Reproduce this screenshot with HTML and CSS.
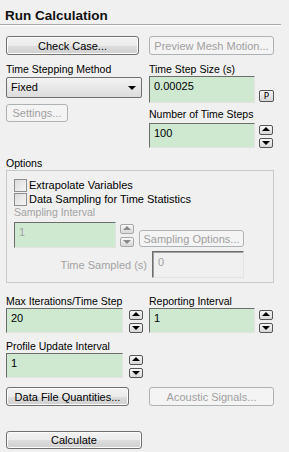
FILE: index.html
```html
<html>
<head>
<title>Run Calculation</title>
<link rel="stylesheet" href="styles.css">
</head>
<body>
	<div id="panel">

		<div class="header"><h1>Run Calculation</h1></div>

		<div class="grid row-buttons">
			<button class="btn wide">Check Case...</button>
			<button class="btn off preview">Preview Mesh Motion...</button>
		</div>

		<div class="grid row-time">
			<div class="col">
				<label class="lbl">Time Stepping Method</label>
				<div class="select">Fixed<span class="caret"></span></div>
				<button class="btn off settings">Settings...</button>
			</div>
			<div class="col">
				<label class="lbl">Time Step Size (s)</label>
				<div class="field bottom">
					<div class="input tall">0.00025</div>
					<button class="pbtn">P</button>
				</div>
				<label class="lbl steps">Number of Time Steps</label>
				<div class="field">
					<div class="input">100</div>
					<div class="spin"><span class="up"></span><span class="down"></span></div>
				</div>
			</div>
		</div>

		<label class="lbl options">Options</label>
		<div class="group">
			<div class="check"><span class="box"></span>Extrapolate Variables</div>
			<div class="check"><span class="box"></span>Data Sampling for Time Statistics</div>
			<label class="lbl dim">Sampling Interval</label>
			<div class="sampling">
				<div class="field">
					<div class="input small dim">1</div>
					<div class="spin dim"><span class="up"></span><span class="down"></span></div>
				</div>
				<button class="btn off sopts">Sampling Options...</button>
			</div>
			<div class="sampled">
				<span class="dim sampled-lbl">Time Sampled (s)</span>
				<div class="input gray">0</div>
			</div>
		</div>

		<div class="grid row-iter">
			<div class="col">
				<label class="lbl">Max Iterations/Time Step</label>
				<div class="field">
					<div class="input left">20</div>
					<div class="spin"><span class="up"></span><span class="down"></span></div>
				</div>
				<label class="lbl profile">Profile Update Interval</label>
				<div class="field">
					<div class="input left">1</div>
					<div class="spin"><span class="up"></span><span class="down"></span></div>
				</div>
			</div>
			<div class="col">
				<label class="lbl">Reporting Interval</label>
				<div class="field">
					<div class="input">1</div>
					<div class="spin"><span class="up"></span><span class="down"></span></div>
				</div>
			</div>
		</div>

		<div class="grid row-data">
			<button class="btn datafile">Data File Quantities...</button>
			<button class="btn off preview">Acoustic Signals...</button>
		</div>

		<button class="btn calc">Calculate</button>
	</div>
</body>
</html>
```

FILE: styles.css
```css
body{
	margin:0;padding:0;
	background-color:#f0f0f0;
	font-family:"Liberation Sans", Arial, sans-serif;
	font-size:10.5px;
	color:#000;
}

	div#panel{
		padding:0 0 0 6px;
		width:283px;
		height:452px;
		box-sizing:border-box;
		overflow:hidden;
	}

	div.header{
		margin-left:-6px;
		width:281px;
		height:24px;
		border-bottom:1px solid #a8a8a8;
		box-shadow:0 1px 0 #ffffff;
	}

	div.header h1{
		margin:0;
		padding:8px 0 0 5px;
		font-size:13.5px;
		line-height:15px;
		font-weight:bold;
		color:#111;
	}

	div.grid{
		display:grid;
		grid-template-columns:136px 126px;
		column-gap:7px;
	}

	div.col{
		display:flex;
		flex-direction:column;
		align-items:flex-start;
	}

	.lbl{
		display:block;
		height:13px;
		line-height:13px;
		white-space:nowrap;
	}

	.dim{
		color:#a3a3a3;
	}

	/* buttons */
	.btn{
		font-family:inherit;
		font-size:11px;
		height:19px;
		padding:0;
		color:#000;
		border:1px solid #707070;
		border-radius:3px;
		background:linear-gradient(#f2f2f2 0%, #ebebeb 50%, #dddddd 51%, #cfcfcf 100%);
		box-shadow:inset 0 0 0 1px #fcfcfc;
	}

	.btn.off{
		color:#a0a0a0;
		border-color:#adb2b5;
		background:#f4f4f4;
		box-shadow:none;
	}

	div.row-buttons{ margin-top:11px; }
	.btn.wide{ width:133px; }
	.btn.preview{ width:125px; }

	div.row-time{ margin-top:8px; }

	div.select{
		position:relative;
		width:136px;
		height:21px;
		margin-top:1px;
		box-sizing:border-box;
		border:1px solid #707070;
		border-radius:2px;
		background:linear-gradient(#f3f3f3, #dcdcdc);
		padding:3px 0 0 4px;
		line-height:13px;
		font-size:11px;
	}

	span.caret{
		position:absolute;
		right:5px;
		top:8px;
		border-left:4px solid transparent;
		border-right:4px solid transparent;
		border-top:4px solid #000;
	}

	.btn.settings{
		width:62px;
		height:18px;
		margin-top:6px;
	}

	div.field{
		display:flex;
		align-items:flex-start;
		gap:4px;
	}

	div.field.bottom{ align-items:flex-end; }

	div.input{
		width:106px;
		height:25px;
		box-sizing:border-box;
		background-color:#cfe9d1;
		border:1px solid #a0a0a0;
		border-top-color:#6d6d6d;
		border-left-color:#6d6d6d;
		border-bottom-color:#e3e3e3;
		border-right-color:#e3e3e3;
		padding:2px 0 0 4px;
		line-height:14px;
		font-size:11px;
	}

	div.input.tall{ height:27px; }
	div.input.left{ width:117px; margin-right:2px; }
	div.input.small{ width:102px; height:26px; }

	div.input.gray{
		width:92px;
		height:27px;
		background-color:#f0f0f0;
		color:#a0a0a0;
		box-shadow:inset 1px 1px 0 #a0a0a0;
		padding:3px 0 0 5px;
	}

	button.pbtn{
		width:15px;
		height:12px;
		margin-bottom:1px;
		padding:0;
		font-family:"DejaVu Sans Mono", monospace;
		font-size:9px;
		line-height:9px;
		border:1px solid #555;
		border-radius:2px;
		background:linear-gradient(#f6f6f6, #d6d6d6);
	}

	div.spin{
		display:flex;
		flex-direction:column;
		gap:3px;
		margin-top:2px;
	}

	div.spin span{
		position:relative;
		display:block;
		width:12px;
		height:8px;
		border:1px solid #555;
		border-radius:2px;
		background:linear-gradient(#f8f8f8, #d8d8d8);
	}

	div.spin span::after{
		content:'';
		position:absolute;
		left:2px;
		border-left:4px solid transparent;
		border-right:4px solid transparent;
	}

	div.spin span.up::after{ top:1px; border-bottom:4px solid #000; }
	div.spin span.down::after{ top:2px; border-top:4px solid #000; }

	div.spin.dim span{ border-color:#a8a8a8; }
	div.spin.dim span.up::after{ border-bottom-color:#8a8a8a; }
	div.spin.dim span.down::after{ border-top-color:#8a8a8a; }

	.lbl.steps{ margin-top:5px; margin-bottom:2px; }

	.lbl.options{ margin-top:9px; }

	div.group{
		width:268px;
		height:113px;
		box-sizing:border-box;
		border:1px solid #c5c9cc;
		padding:7px 0 0 7px;
	}

	div.check{
		display:flex;
		align-items:center;
		height:14px;
		gap:2px;
		font-size:11px;
	}

	span.box{
		width:11px;
		height:11px;
		border:1px solid #8e8f8f;
		background:linear-gradient(135deg, #dcdcdc, #f6f6f6);
	}

	div.sampling{
		display:flex;
		align-items:flex-end;
		gap:5px;
		margin-top:3px;
	}

	.btn.sopts{
		width:105px;
		height:17px;
		margin-bottom:1px;
	}

	div.sampled{
		display:flex;
		align-items:center;
		gap:5px;
		margin-top:3px;
		font-size:11px;
	}

	span.sampled-lbl{
		width:133px;
		text-align:right;
	}

	div.row-iter{ margin-top:12px; }

	.lbl.profile{ margin-top:7px; }

	div.row-data{ margin-top:9px; }
	.btn.datafile{ width:123px; }

	.btn.calc{
		width:136px;
		height:18px;
		margin-top:25px;
	}
```
